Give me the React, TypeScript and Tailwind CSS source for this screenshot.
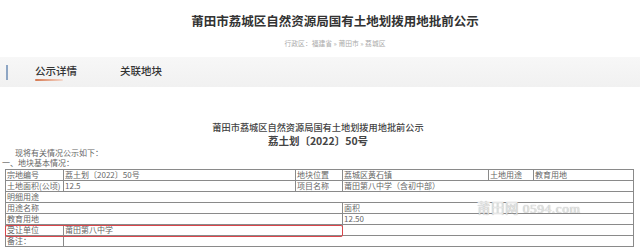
import React from 'react';

const cell = 'border border-[#8a8a8a] px-[1px] align-middle whitespace-nowrap';

export default function App() {
  return (
    <div className="w-[640px] h-[252px] overflow-hidden bg-white text-[#333] font-['Noto_Sans_CJK_SC','Noto_Sans',sans-serif]">
      {/* Header */}
      <div className="h-[57px] flex flex-col items-center pl-[30px] pt-[13px]">
        <h1 className="text-[12.5px] leading-[16px] font-bold text-[#333]">莆田市荔城区自然资源局国有土地划拨用地批前公示</h1>
        <div className="mt-[9px] text-[6.8px] leading-[10px] text-[#aaa]">行政区：福建省 » 莆田市 » 荔城区</div>
      </div>

      {/* Tabs */}
      <div className="h-[30px] bg-gradient-to-b from-[#f7f7f7] to-[#f1f1f1] flex items-center">
        <div className="ml-[6px] w-[2px] h-[15px] bg-[#8ea6c4]" />
        <div className="ml-[27px] flex flex-col">
          <span className="text-[10.5px] leading-[14px] font-medium text-[#333]">公示详情</span>
          <span className="mt-[1px] w-[28px] h-[2px] rounded-full bg-gradient-to-r from-[#d4774e] to-[#f3d8cc]" />
        </div>
        <span className="ml-[43px] mb-[3px] text-[10.5px] leading-[14px] font-medium text-[#333]">关联地块</span>
      </div>

      {/* Document */}
      <div className="pt-[33px] flex flex-col items-center pr-[4px] leading-[14px] text-[#444]">
        <div className="text-[9.2px] font-medium">莆田市荔城区自然资源局国有土地划拨用地批前公示</div>
        <div className="text-[10.5px] font-bold">荔土划〔2022〕50号</div>
      </div>
      <div className="pl-[15px] text-[8px] leading-[10px] text-[#666]">现将有关情况公示如下：</div>
      <div className="pl-[2px] text-[8px] leading-[10px] text-[#666]">一、地块基本情况：</div>

      <div className="relative ml-[5px] mt-[1px] w-[628px]">
        <table className="w-[628px] table-fixed border-collapse text-[8px] leading-[10px] text-[#666]">
          <colgroup>
            <col className="w-[58px]" />
            <col className="w-[232px]" />
            <col className="w-[47px]" />
            <col className="w-[146px]" />
            <col className="w-[45px]" />
            <col className="w-[100px]" />
          </colgroup>
          <tbody>
            <tr className="h-[11px]">
              <td className={cell}>宗地编号</td>
              <td className={cell}>荔土划〔2022〕50号</td>
              <td className={cell}>地块位置</td>
              <td className={cell}>荔城区黄石镇</td>
              <td className={cell}>土地用途</td>
              <td className={cell}>教育用地</td>
            </tr>
            <tr className="h-[11px]">
              <td className={cell}>土地面积(公顷)</td>
              <td className={cell}>12.5</td>
              <td className={cell}>项目名称</td>
              <td className={cell} colSpan={3}>莆田第八中学（含初中部）</td>
            </tr>
            <tr className="h-[11px]">
              <td className={cell} colSpan={6}>明细用途</td>
            </tr>
            <tr className="h-[11px]">
              <td className={cell} colSpan={3}>用途名称</td>
              <td className={cell} colSpan={3}>面积</td>
            </tr>
            <tr className="h-[11px]">
              <td className={cell} colSpan={3}>教育用地</td>
              <td className={cell} colSpan={3}>12.50</td>
            </tr>
            <tr className="h-[11px]">
              <td className={cell}>受让单位</td>
              <td className={cell} colSpan={2}>莆田第八中学</td>
              <td className={cell} colSpan={3}></td>
            </tr>
            <tr className="h-[11px]">
              <td className={cell}>备注：</td>
              <td className={cell} colSpan={5}></td>
            </tr>
          </tbody>
        </table>

        {/* highlight box */}
        <div className="absolute left-0 top-[56px] w-[338px] h-[12px] border-[1.5px] border-[#d9474c] rounded-[2px]" />

        {/* watermark */}
        <div className="absolute left-[472px] top-[33px] text-[13.5px] leading-[14px] tracking-[0.5px] text-[#e6e6e6] font-['Liberation_Serif','Noto_Sans_CJK_SC',serif] [text-shadow:0_0_1px_#9a9a9a]">
          莆田网 0594.com
        </div>
      </div>
    </div>
  );
}
